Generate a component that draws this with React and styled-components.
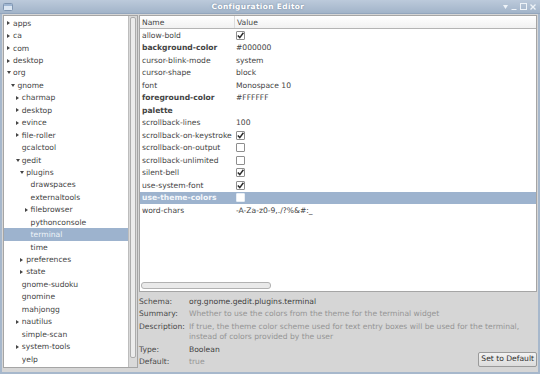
import styled, { createGlobalStyle } from "styled-components";

const GlobalStyle = createGlobalStyle`
  html, body {
    margin: 0;
    padding: 0;
    width: 540px;
    height: 374px;
    overflow: hidden;
    background: #a9b9cc;
  }
  body {
    font-family: "DejaVu Sans", "Liberation Sans", sans-serif;
    font-size: 7.6px;
  }
  * {
    box-sizing: border-box;
  }
`;

const Window = styled.div`
  width: 540px;
  height: 374px;
  display: flex;
  flex-direction: column;
  background: #a7b8cc;
  padding: 0 2px 2px 2px;
`;

const TitleBar = styled.div`
  height: 14px;
  flex: none;
  display: flex;
  align-items: center;
  margin: 0 -2px;
  padding: 0 4px 0 3px;
  background: linear-gradient(#bccadb, #a2b4c9);
  border-bottom: 1px solid #93a6bd;
`;

const Title = styled.div`
  flex: 1;
  text-align: center;
  color: #fff;
  font-weight: bold;
  font-size: 7.4px;
  letter-spacing: 0.4px;
  text-shadow: 0 0 2px #6d8099;
`;

const Controls = styled.div`
  display: flex;
  gap: 3px;
  align-items: center;
`;

const Body = styled.div`
  flex: 1;
  display: flex;
  gap: 1px;
  background: #d6d6d6;
  padding: 1px 1px 4px 1px;
  min-height: 0;
`;

const TreePanel = styled.div`
  width: 135px;
  flex: none;
  display: flex;
  border: 1px solid #a5a5a5;
  background: #fff;
`;

const TreeList = styled.div`
  flex: 1;
  padding-top: 1px;
`;

const TreeRow = styled.div`
  height: 12.45px;
  display: flex;
  align-items: center;
  padding-left: ${({ $level }) => 2 + $level * 4.4}px;
  color: ${({ $selected }) => ($selected ? "#eef3f9" : "#444")};
  background: ${({ $selected }) => ($selected ? "#9db3ce" : "transparent")};
  white-space: nowrap;
`;

const Expander = styled.span`
  width: 7px;
  flex: none;
  display: flex;
  align-items: center;
  padding-left: 1px;
`;

const VScroll = styled.div`
  width: 9px;
  flex: none;
  background: #d9d9d9;
  border-left: 1px solid #bdbdbd;
  padding: 1px 1px 9px 1px;
  display: flex;
`;

const Thumb = styled.div`
  flex: 1;
  background: #ececec;
  border: 1px solid #acacac;
  border-radius: 2px;
`;

const RightPanel = styled.div`
  flex: 1;
  display: flex;
  flex-direction: column;
  min-width: 0;
`;

const KeyTable = styled.div`
  flex: 1;
  min-height: 0;
  display: flex;
  flex-direction: column;
  background: #fff;
  border: 1px solid #a5a5a5;
`;

const Rows = styled.div`
  flex: 1 1 auto;
  min-height: 0;
`;

const HeaderRow = styled.div`
  height: 13px;
  display: grid;
  grid-template-columns: 95px 1fr;
  align-items: center;
  background: linear-gradient(#ffffff, #f1f1f1);
  border-bottom: 1px solid #b4b4b4;
  color: #444;
`;

const HeaderCell = styled.div`
  padding-left: 2px;
  height: 100%;
  display: flex;
  align-items: center;
  border-right: ${({ $divider }) => ($divider ? "1px solid #dcdcdc" : "none")};
`;

const KeyRow = styled.div`
  height: 12.5px;
  display: grid;
  grid-template-columns: 96px 1fr;
  align-items: center;
  background: ${({ $selected }) => ($selected ? "#9db3ce" : "transparent")};
  color: ${({ $selected }) => ($selected ? "#f4f7fb" : "#444")};
`;

const KeyName = styled.div`
  padding-left: 2px;
  font-weight: ${({ $bold }) => ($bold ? "bold" : "normal")};
  white-space: nowrap;
`;

const KeyValue = styled.div`
  white-space: nowrap;
  display: flex;
  align-items: center;
`;

const Check = styled.span`
  width: 9px;
  height: 9px;
  border: 1px solid ${({ $selected }) => ($selected ? "#e8eef5" : "#8e8e8e")};
  background: #fff;
  display: flex;
  align-items: center;
  justify-content: center;
  border-radius: 1px;
`;

const HScroll = styled.div`
  flex: none;
  margin-top: auto;
  height: 10px;
  padding: 1px 1px 2px 1px;
  background: #fff;
  display: flex;
`;

const HThumb = styled.div`
  width: 130px;
  background: #e9e9e9;
  border: 1px solid #b1b1b1;
  border-radius: 3px;
`;

const Info = styled.div`
  flex: none;
  height: 76px;
  display: grid;
  grid-template-columns: 50px 1fr;
  align-content: start;
  padding-top: 4px;
  line-height: 12.3px;
`;

const Label = styled.div`
  color: #4a4a4a;
  white-space: nowrap;
`;

const InfoValue = styled.div`
  color: ${({ $muted }) => ($muted ? "#959595" : "#3e3e3e")};
  line-height: ${({ $tight }) => ($tight ? "10px" : "inherit")};
  padding: ${({ $tight }) => ($tight ? "1px 0 2px" : "0")};
  display: flex;
  justify-content: space-between;
  align-items: flex-start;
`;

const Button = styled.button`
  font: inherit;
  color: #2e2e2e;
  height: 15px;
  margin-top: -4px;
  padding: 0 2px;
  background: linear-gradient(#f2f2f2, #dcdcdc);
  border: 1px solid #9a9a9a;
  border-radius: 2px;
`;

const tree = [
  ["apps", 0, "c"],
  ["ca", 0, "c"],
  ["com", 0, "c"],
  ["desktop", 0, "c"],
  ["org", 0, "e"],
  ["gnome", 1, "e"],
  ["charmap", 2, "c"],
  ["desktop", 2, "c"],
  ["evince", 2, "c"],
  ["file-roller", 2, "c"],
  ["gcalctool", 2, ""],
  ["gedit", 2, "e"],
  ["plugins", 3, "e"],
  ["drawspaces", 4, ""],
  ["externaltools", 4, ""],
  ["filebrowser", 4, "c"],
  ["pythonconsole", 4, ""],
  ["terminal", 4, "", true],
  ["time", 4, ""],
  ["preferences", 3, "c"],
  ["state", 3, "c"],
  ["gnome-sudoku", 2, ""],
  ["gnomine", 2, ""],
  ["mahjongg", 2, ""],
  ["nautilus", 2, "c"],
  ["simple-scan", 2, ""],
  ["system-tools", 2, "c"],
  ["yelp", 2, ""],
];

const keys = [
  { name: "allow-bold", check: true },
  { name: "background-color", bold: true, value: "#000000" },
  { name: "cursor-blink-mode", value: "system" },
  { name: "cursor-shape", value: "block" },
  { name: "font", value: "Monospace 10" },
  { name: "foreground-color", bold: true, value: "#FFFFFF" },
  { name: "palette", bold: true, value: "" },
  { name: "scrollback-lines", value: "100" },
  { name: "scrollback-on-keystroke", check: true },
  { name: "scrollback-on-output", check: false },
  { name: "scrollback-unlimited", check: false },
  { name: "silent-bell", check: true },
  { name: "use-system-font", check: true },
  { name: "use-theme-colors", check: false, selected: true, bold: true },
  { name: "word-chars", value: "-A-Za-z0-9,./?%&#:_" },
];

function Arrow({ kind }) {
  if (!kind) return null;
  return kind === "e" ? (
    <svg width="4" height="3" viewBox="0 0 4 3">
      <path d="M0 0 L4 0 L2 3 Z" fill="#444" />
    </svg>
  ) : (
    <svg width="3" height="4" viewBox="0 0 3 4">
      <path d="M0 0 L3 2 L0 4 Z" fill="#444" />
    </svg>
  );
}

function CheckBox({ checked, selected }) {
  return (
    <Check $selected={selected}>
      {checked && (
        <svg width="7" height="7" viewBox="0 0 7 7">
          <path d="M0.8 3.4 L2.8 5.6 L6.4 0.8" stroke="#2c2c2c" strokeWidth="1.5" fill="none" />
        </svg>
      )}
    </Check>
  );
}

export default function App() {
  return (
    <>
      <GlobalStyle />
      <Window>
        <TitleBar>
          <svg width="10" height="8" viewBox="0 0 10 8">
            <rect x="0.5" y="0.5" width="9" height="7" rx="1" fill="#dbe6f2" stroke="#7f95b0" />
            <rect x="1" y="1" width="8" height="2" fill="#9fb6d2" />
          </svg>
          <Title>Configuration Editor</Title>
          <Controls>
            <svg width="5" height="4" viewBox="0 0 5 4">
              <path d="M0 0 L5 0 L2.5 4 Z" fill="#eef3f8" />
            </svg>
            <svg width="6" height="6" viewBox="0 0 6 6">
              <path d="M0.5 5.5 H5.5" stroke="#eef3f8" strokeWidth="1" />
            </svg>
            <svg width="7" height="7" viewBox="0 0 7 7">
              <rect x="0.5" y="0.5" width="6" height="6" fill="none" stroke="#eef3f8" />
            </svg>
            <svg width="6" height="6" viewBox="0 0 6 6">
              <path d="M0.5 0.5 L5.5 5.5 M5.5 0.5 L0.5 5.5" stroke="#eef3f8" strokeWidth="1.3" />
            </svg>
          </Controls>
        </TitleBar>
        <Body>
          <TreePanel>
            <TreeList>
              {tree.map(([label, level, kind, selected], i) => (
                <TreeRow key={i} $level={level} $selected={selected}>
                  <Expander>
                    <Arrow kind={kind} />
                  </Expander>
                  {label}
                </TreeRow>
              ))}
            </TreeList>
            <VScroll>
              <Thumb />
            </VScroll>
          </TreePanel>
          <RightPanel>
            <KeyTable>
              <HeaderRow>
                <HeaderCell $divider>Name</HeaderCell>
                <HeaderCell>Value</HeaderCell>
              </HeaderRow>
              <Rows>
                {keys.map((k) => (
                  <KeyRow key={k.name} $selected={k.selected}>
                    <KeyName $bold={k.bold}>{k.name}</KeyName>
                    <KeyValue>
                      {"check" in k ? (
                        <CheckBox checked={k.check} selected={k.selected} />
                      ) : (
                        k.value
                      )}
                    </KeyValue>
                  </KeyRow>
                ))}
              </Rows>
              <HScroll>
                <HThumb />
              </HScroll>
            </KeyTable>
            <Info>
              <Label>Schema:</Label>
              <InfoValue>org.gnome.gedit.plugins.terminal</InfoValue>
              <Label>Summary:</Label>
              <InfoValue $muted>
                Whether to use the colors from the theme for the terminal widget
              </InfoValue>
              <Label>Description:</Label>
              <InfoValue $muted $tight>
                If true, the theme color scheme used for text entry boxes will be used for the
                terminal, instead of colors provided by the user
              </InfoValue>
              <Label>Type:</Label>
              <InfoValue>Boolean</InfoValue>
              <Label>Default:</Label>
              <InfoValue $muted>
                true
                <Button>Set to Default</Button>
              </InfoValue>
            </Info>
          </RightPanel>
        </Body>
      </Window>
    </>
  );
}
